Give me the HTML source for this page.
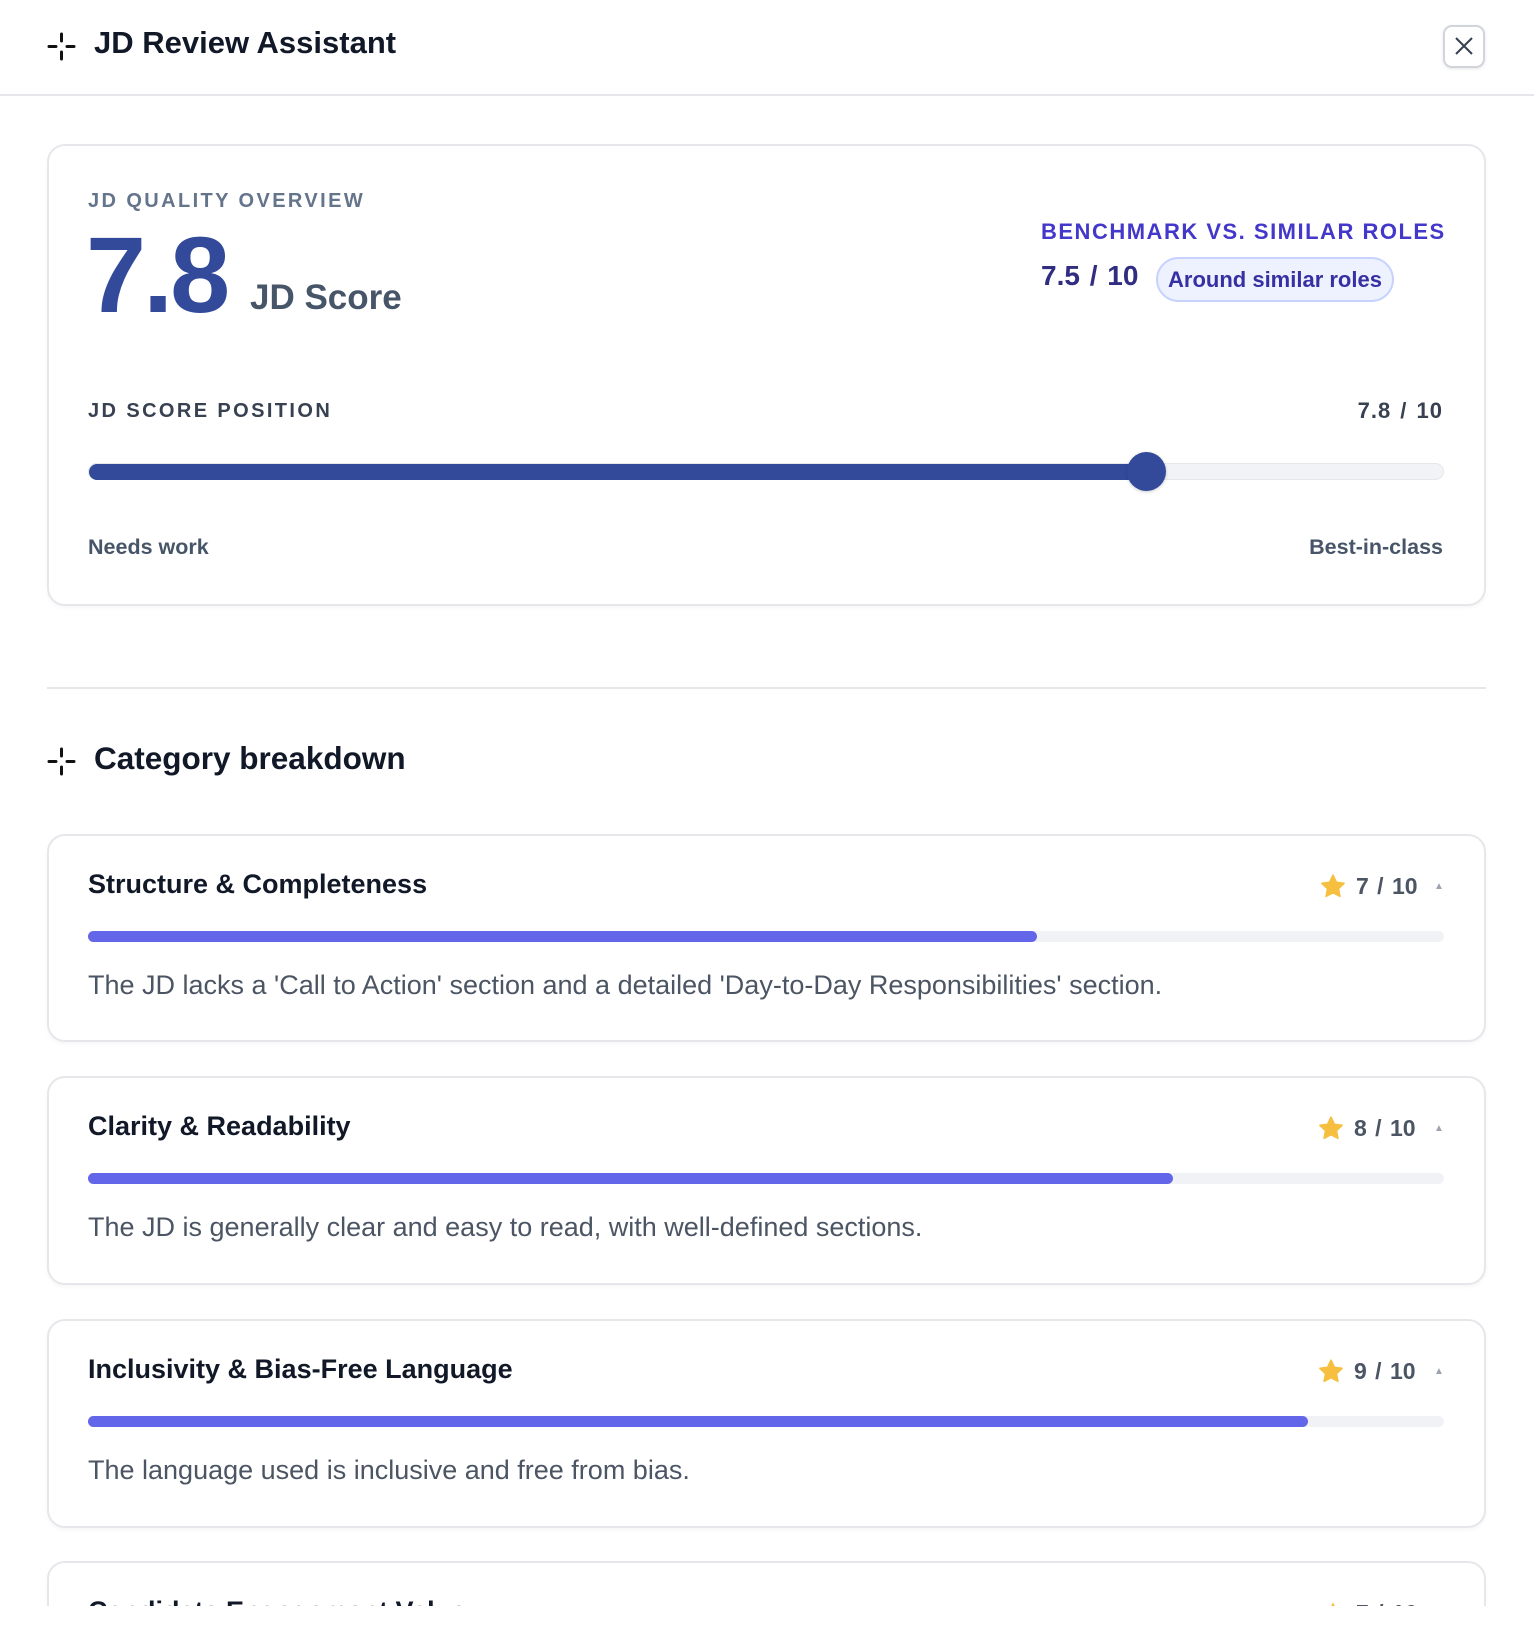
<!DOCTYPE html>
<html><head><meta charset="utf-8"><style>
*{box-sizing:border-box;margin:0;padding:0}
html,body{width:1534px;height:1636px;overflow:hidden}
body{background:#fff;font-family:"Liberation Sans",sans-serif;position:relative;color:#111827}
#w{position:absolute;left:0;top:0;width:1534px;height:1606px;overflow:hidden}
.a{position:absolute;white-space:nowrap}
.card{position:absolute;left:47px;width:1439px;border:2px solid #e5e7eb;border-radius:18px;background:#fff;box-shadow:0 2px 4px rgba(0,0,0,.04)}
.lbl{font-weight:700;letter-spacing:2.4px;font-size:20px}
.ct{font-size:27px;font-weight:700;color:#111827;left:88px}
.sc{font-size:23px;color:#4b5563;font-weight:700;word-spacing:2px}
.bar{position:absolute;left:88px;width:1356px;height:11px;border-radius:6px;background:#f1f2f5}
.bar i{display:block;height:11px;border-radius:6px;background:#6366e8}
.desc{font-size:27px;color:#4b5563;left:88px}
</style></head><body><div id="w">
<svg class="a" style="left:47px;top:32px" width="29" height="29" viewBox="0 0 29 29"><g stroke="#111" stroke-width="3" stroke-linecap="round"><line x1="14.5" y1="2" x2="14.5" y2="9"/><line x1="14.5" y1="20" x2="14.5" y2="27"/><line x1="2" y1="14.5" x2="9" y2="14.5"/><line x1="20" y1="14.5" x2="27" y2="14.5"/></g></svg>
<div class="a" style="left:94px;top:25px;font-size:31px;font-weight:700;color:#111827">JD Review Assistant</div>
<div class="a" style="left:1443px;top:25px;width:42px;height:43px;border:2px solid #d1d5db;border-radius:9px;box-shadow:0 1px 3px rgba(0,0,0,.1)"><svg width="38" height="39" viewBox="0 0 38 39"><g stroke="#374151" stroke-width="2"><line x1="11" y1="11" x2="27" y2="27"/><line x1="27" y1="11" x2="11" y2="27"/></g></svg></div>
<div class="a" style="left:0;top:94px;width:1534px;height:2px;background:#e5e7eb"></div>

<div class="card" style="top:144px;height:462px"></div>
<div class="a lbl" style="left:88px;top:190px;color:#64748b">JD QUALITY OVERVIEW</div>
<div class="a" style="left:86px;top:216px;font-size:108px;font-weight:700;color:#334a9a;letter-spacing:-3px;line-height:118px">7.8</div>
<div class="a" style="left:250px;top:278px;font-size:35px;font-weight:700;color:#475569">JD Score</div>
<div class="a lbl" style="left:1041px;top:219px;font-size:22px;letter-spacing:1.5px;color:#4338ca">BENCHMARK VS. SIMILAR ROLES</div>
<div class="a" style="left:1041px;top:260px;font-size:28px;font-weight:700;color:#312e81;word-spacing:2px">7.5 / 10</div>
<div class="a" style="left:1156px;top:257px;width:238px;height:45px;border:2px solid #c7d2fe;background:#eef2ff;border-radius:23px;font-size:22px;font-weight:700;color:#3730a3;text-align:center;line-height:41px">Around similar roles</div>
<div class="a lbl" style="left:88px;top:400px;color:#374151">JD SCORE POSITION</div>
<div class="a" style="right:91px;top:398px;font-size:22px;font-weight:700;color:#374151;letter-spacing:1px;word-spacing:2px">7.8 / 10</div>
<div class="a" style="left:88px;top:463px;width:1356px;height:17px;border-radius:9px;background:#f1f3f6;border:1px solid #e5e7eb"></div>
<div class="a" style="left:89px;top:464px;width:1060px;height:16px;border-radius:8px;background:#334a9a"></div>
<div class="a" style="left:1127px;top:452px;width:39px;height:39px;border-radius:50%;background:#334a9a;box-shadow:0 1px 3px rgba(0,0,0,.2)"></div>
<div class="a" style="left:88px;top:535px;font-size:21.5px;font-weight:700;color:#475569">Needs work</div>
<div class="a" style="right:91px;top:535px;font-size:21.5px;font-weight:700;color:#475569">Best-in-class</div>

<div class="a" style="left:47px;top:687px;width:1439px;height:2px;background:#e5e7eb"></div>
<svg class="a" style="left:47px;top:747px" width="29" height="29" viewBox="0 0 29 29"><g stroke="#111" stroke-width="3" stroke-linecap="round"><line x1="14.5" y1="2" x2="14.5" y2="9"/><line x1="14.5" y1="20" x2="14.5" y2="27"/><line x1="2" y1="14.5" x2="9" y2="14.5"/><line x1="20" y1="14.5" x2="27" y2="14.5"/></g></svg>
<div class="a" style="left:94px;top:740px;font-size:31.5px;font-weight:700">Category breakdown</div>

<div class="card" style="top:834px;height:208px"></div>
<div class="a ct" style="top:869px">Structure &amp; Completeness</div>
<svg class="a" style="left:1319px;top:873px" width="28" height="27" viewBox="0 0 24 24"><path d="M12 2l3 6.3 6.8.9-5 4.7 1.3 6.8L12 17.4 5.9 20.7l1.3-6.8-5-4.7 6.8-.9z" fill="#f6bf3f" stroke="#f6bf3f" stroke-linejoin="round" stroke-width="1.5"/></svg>
<div class="a sc" style="left:1356px;top:873px">7 / 10</div>
<div class="a" style="left:1434px;top:881px;font-size:10px;color:#9ca3af">▲</div>
<div class="bar" style="top:931px"><i style="width:949px"></i></div>
<div class="a desc" style="top:970px">The JD lacks a 'Call to Action' section and a detailed 'Day-to-Day Responsibilities' section.</div>

<div class="card" style="top:1076px;height:209px"></div>
<div class="a ct" style="top:1111px">Clarity &amp; Readability</div>
<svg class="a" style="left:1317px;top:1115px" width="28" height="27" viewBox="0 0 24 24"><path d="M12 2l3 6.3 6.8.9-5 4.7 1.3 6.8L12 17.4 5.9 20.7l1.3-6.8-5-4.7 6.8-.9z" fill="#f6bf3f" stroke="#f6bf3f" stroke-linejoin="round" stroke-width="1.5"/></svg>
<div class="a sc" style="left:1354px;top:1115px">8 / 10</div>
<div class="a" style="left:1434px;top:1123px;font-size:10px;color:#9ca3af">▲</div>
<div class="bar" style="top:1173px"><i style="width:1085px"></i></div>
<div class="a desc" style="top:1212px">The JD is generally clear and easy to read, with well-defined sections.</div>

<div class="card" style="top:1319px;height:209px"></div>
<div class="a ct" style="top:1354px">Inclusivity &amp; Bias-Free Language</div>
<svg class="a" style="left:1317px;top:1358px" width="28" height="27" viewBox="0 0 24 24"><path d="M12 2l3 6.3 6.8.9-5 4.7 1.3 6.8L12 17.4 5.9 20.7l1.3-6.8-5-4.7 6.8-.9z" fill="#f6bf3f" stroke="#f6bf3f" stroke-linejoin="round" stroke-width="1.5"/></svg>
<div class="a sc" style="left:1354px;top:1358px">9 / 10</div>
<div class="a" style="left:1434px;top:1366px;font-size:10px;color:#9ca3af">▲</div>
<div class="bar" style="top:1416px"><i style="width:1220px"></i></div>
<div class="a desc" style="top:1455px">The language used is inclusive and free from bias.</div>

<div class="card" style="top:1561px;height:120px"></div>
<div class="a ct" style="top:1596px">Candidate Engagement Value</div>
<svg class="a" style="left:1319px;top:1600px" width="28" height="27" viewBox="0 0 24 24"><path d="M12 2l3 6.3 6.8.9-5 4.7 1.3 6.8L12 17.4 5.9 20.7l1.3-6.8-5-4.7 6.8-.9z" fill="#f6bf3f"/></svg>
<div class="a sc" style="left:1356px;top:1600px">7 / 10</div>
</div></body></html>
